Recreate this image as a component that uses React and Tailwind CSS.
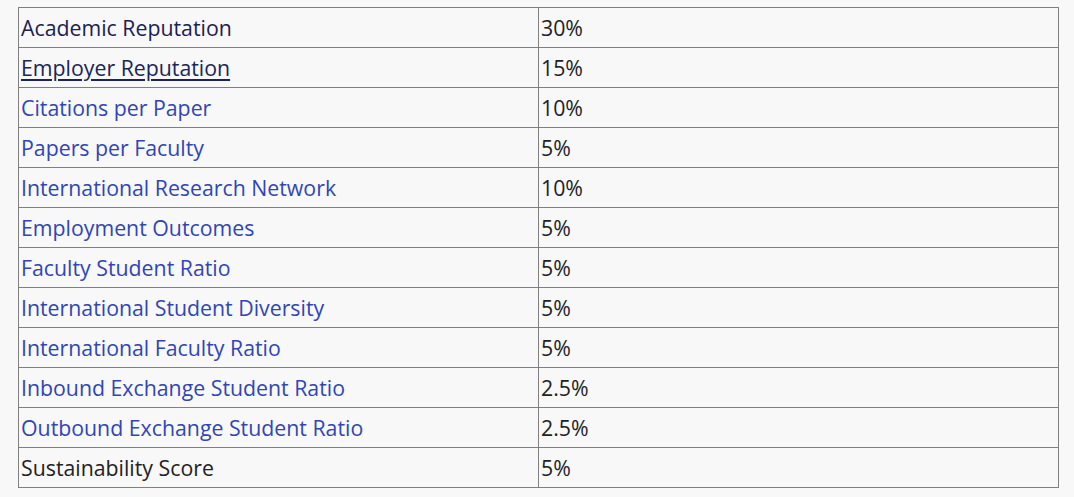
export default function App() {
  const rows = [
    ["Academic Reputation", "30%", "text-[#1c2150]", false],
    ["Employer Reputation", "15%", "text-[#1b2558]", true],
    ["Citations per Paper", "10%", "text-[#3145b6]", false],
    ["Papers per Faculty", "5%", "text-[#3145b6]", false],
    ["International Research Network", "10%", "text-[#3145b6]", false],
    ["Employment Outcomes", "5%", "text-[#3145b6]", false],
    ["Faculty Student Ratio", "5%", "text-[#3145b6]", false],
    ["International Student Diversity", "5%", "text-[#3145b6]", false],
    ["International Faculty Ratio", "5%", "text-[#3145b6]", false],
    ["Inbound Exchange Student Ratio", "2.5%", "text-[#3145b6]", false],
    ["Outbound Exchange Student Ratio", "2.5%", "text-[#3145b6]", false],
    ["Sustainability Score", "5%", "text-[#222222]", false],
  ];
  return (
    <div className="w-[1074px] h-[497px] bg-[#f8f8f8] pt-[7px] pl-[18px] font-['Open_Sans',sans-serif] text-[21.3px]">
      <table className="border-collapse w-[1041px] leading-[38px]">
        <tbody>
          {rows.map(([label, val, color, underline]) => (
            <tr key={label} className="h-[40px]">
              <td className={`border border-[#808080] w-[520px] pl-[2px] pt-[1px] pb-0 align-middle ${color}`}>
                <span className={underline ? "underline underline-offset-[3px]" : ""}>{label}</span>
              </td>
              <td className="border border-[#808080] pl-[2px] pt-[1px] pb-0 align-middle text-[#222222]">{val}</td>
            </tr>
          ))}
        </tbody>
      </table>
    </div>
  );
}
